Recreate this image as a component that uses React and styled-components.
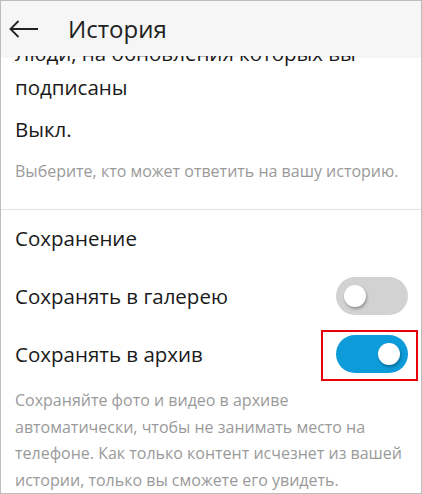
import styled, { createGlobalStyle } from "styled-components";

const GlobalStyle = createGlobalStyle`
	html, body {
		margin: 0;
		padding: 0;
		background: #ffffff;
	}
	* {
		box-sizing: border-box;
	}
`;

const BackArrow = () => (
	<svg width="30" height="18" viewBox="0 0 30 18" fill="none">
		<path
			d="M9.5 1 L1.5 9 L9.5 17 M1.5 9 H29"
			stroke="#222"
			strokeWidth="1.8"
		/>
	</svg>
);

const Switch = ({ on }) => (
	<Track $on={on}>
		<Knob $on={on} />
	</Track>
);

const App = () => {
	return (
		<>
			<GlobalStyle />
			<Screen>
				<Header>
					<BackButton>
						<BackArrow />
					</BackButton>
					<Title>История</Title>
				</Header>
				<Viewport>
					<Content>
						<Option>Люди, на обновления которых вы подписаны</Option>
						<Value>Выкл.</Value>
						<Hint>Выберите, кто может ответить на вашу историю.</Hint>
						<Divider />
						<SectionTitle>Сохранение</SectionTitle>
						<ToggleRow>
							<Label>Сохранять в галерею</Label>
							<Switch on={false} />
						</ToggleRow>
						<ToggleRow>
							<Label>Сохранять в архив</Label>
							<Marked>
								<Switch on />
								<Highlight />
							</Marked>
						</ToggleRow>
						<Note>
							Сохраняйте фото и видео в архиве автоматически, чтобы не занимать
							место на телефоне. Как только контент исчезнет из вашей истории,
							только вы сможете его увидеть.
						</Note>
					</Content>
				</Viewport>
			</Screen>
		</>
	);
};

export default App;

const Screen = styled.div`
	width: 422px;
	height: 494px;
	border: 1px solid #bdbdbd;
	background: #ffffff;
	display: flex;
	flex-direction: column;
	overflow: hidden;
	font-family: "Open Sans", "Noto Sans", sans-serif;
	color: #1a1a1a;
`;
const Header = styled.header`
	height: 55px;
	flex: none;
	display: flex;
	align-items: center;
	background: #f6f6f6;
	box-shadow: 0 1px 2px rgba(0, 0, 0, 0.08);
	position: relative;
	z-index: 1;
`;
const BackButton = styled.div`
	width: 67px;
	padding-left: 8px;
	padding-top: 1px;
	display: flex;
	align-items: center;
`;
const Title = styled.h1`
	margin: 0;
	font-size: 24px;
	font-weight: 400;
	color: #222;
`;
const Viewport = styled.div`
	flex: 1;
	overflow: hidden;
`;
// list is scrolled a little, first line sits under the header
const Content = styled.div`
	margin-top: -20px;
`;
const Option = styled.div`
	padding: 0 40px 0 14px;
	font-size: 20.5px;
	line-height: 34px;
`;
const Value = styled.div`
	padding: 9px 14px 0;
	font-size: 20.5px;
	line-height: 32px;
`;
const Hint = styled.div`
	padding: 13px 14px 24px;
	font-size: 16px;
	line-height: 27px;
	color: #9a9a9a;
`;
const Divider = styled.hr`
	margin: 0;
	border: none;
	border-top: 1px solid #e3e3e3;
`;
const SectionTitle = styled.div`
	padding: 12px 14px 13px;
	font-size: 20.5px;
	line-height: 32px;
`;
const ToggleRow = styled.div`
	display: flex;
	align-items: center;
	justify-content: space-between;
	padding: 0 13px 0 14px;
	height: 58px;
`;
const Label = styled.span`
	font-size: 20.5px;
`;
const Track = styled.div`
	width: 72px;
	height: 38px;
	border-radius: 19px;
	background: ${(p) => (p.$on ? "#0d9bd9" : "#d2d2d2")};
	display: flex;
	align-items: center;
	justify-content: ${(p) => (p.$on ? "flex-end" : "flex-start")};
	padding: 0 8px;
`;
const Knob = styled.div`
	width: 22px;
	height: 22px;
	border-radius: 50%;
	background: #ffffff;
	box-shadow: 1px 2px 3px rgba(0, 0, 0, 0.3);
`;
const Marked = styled.div`
	position: relative;
`;
const Highlight = styled.span`
	position: absolute;
	top: -5px;
	right: -10px;
	bottom: -8px;
	left: -15px;
	border: 2px solid #e8000b;
	pointer-events: none;
`;
const Note = styled.p`
	margin: 0;
	padding: 4px 14px 0;
	font-size: 16px;
	line-height: 26.7px;
	color: #9a9a9a;
`;
